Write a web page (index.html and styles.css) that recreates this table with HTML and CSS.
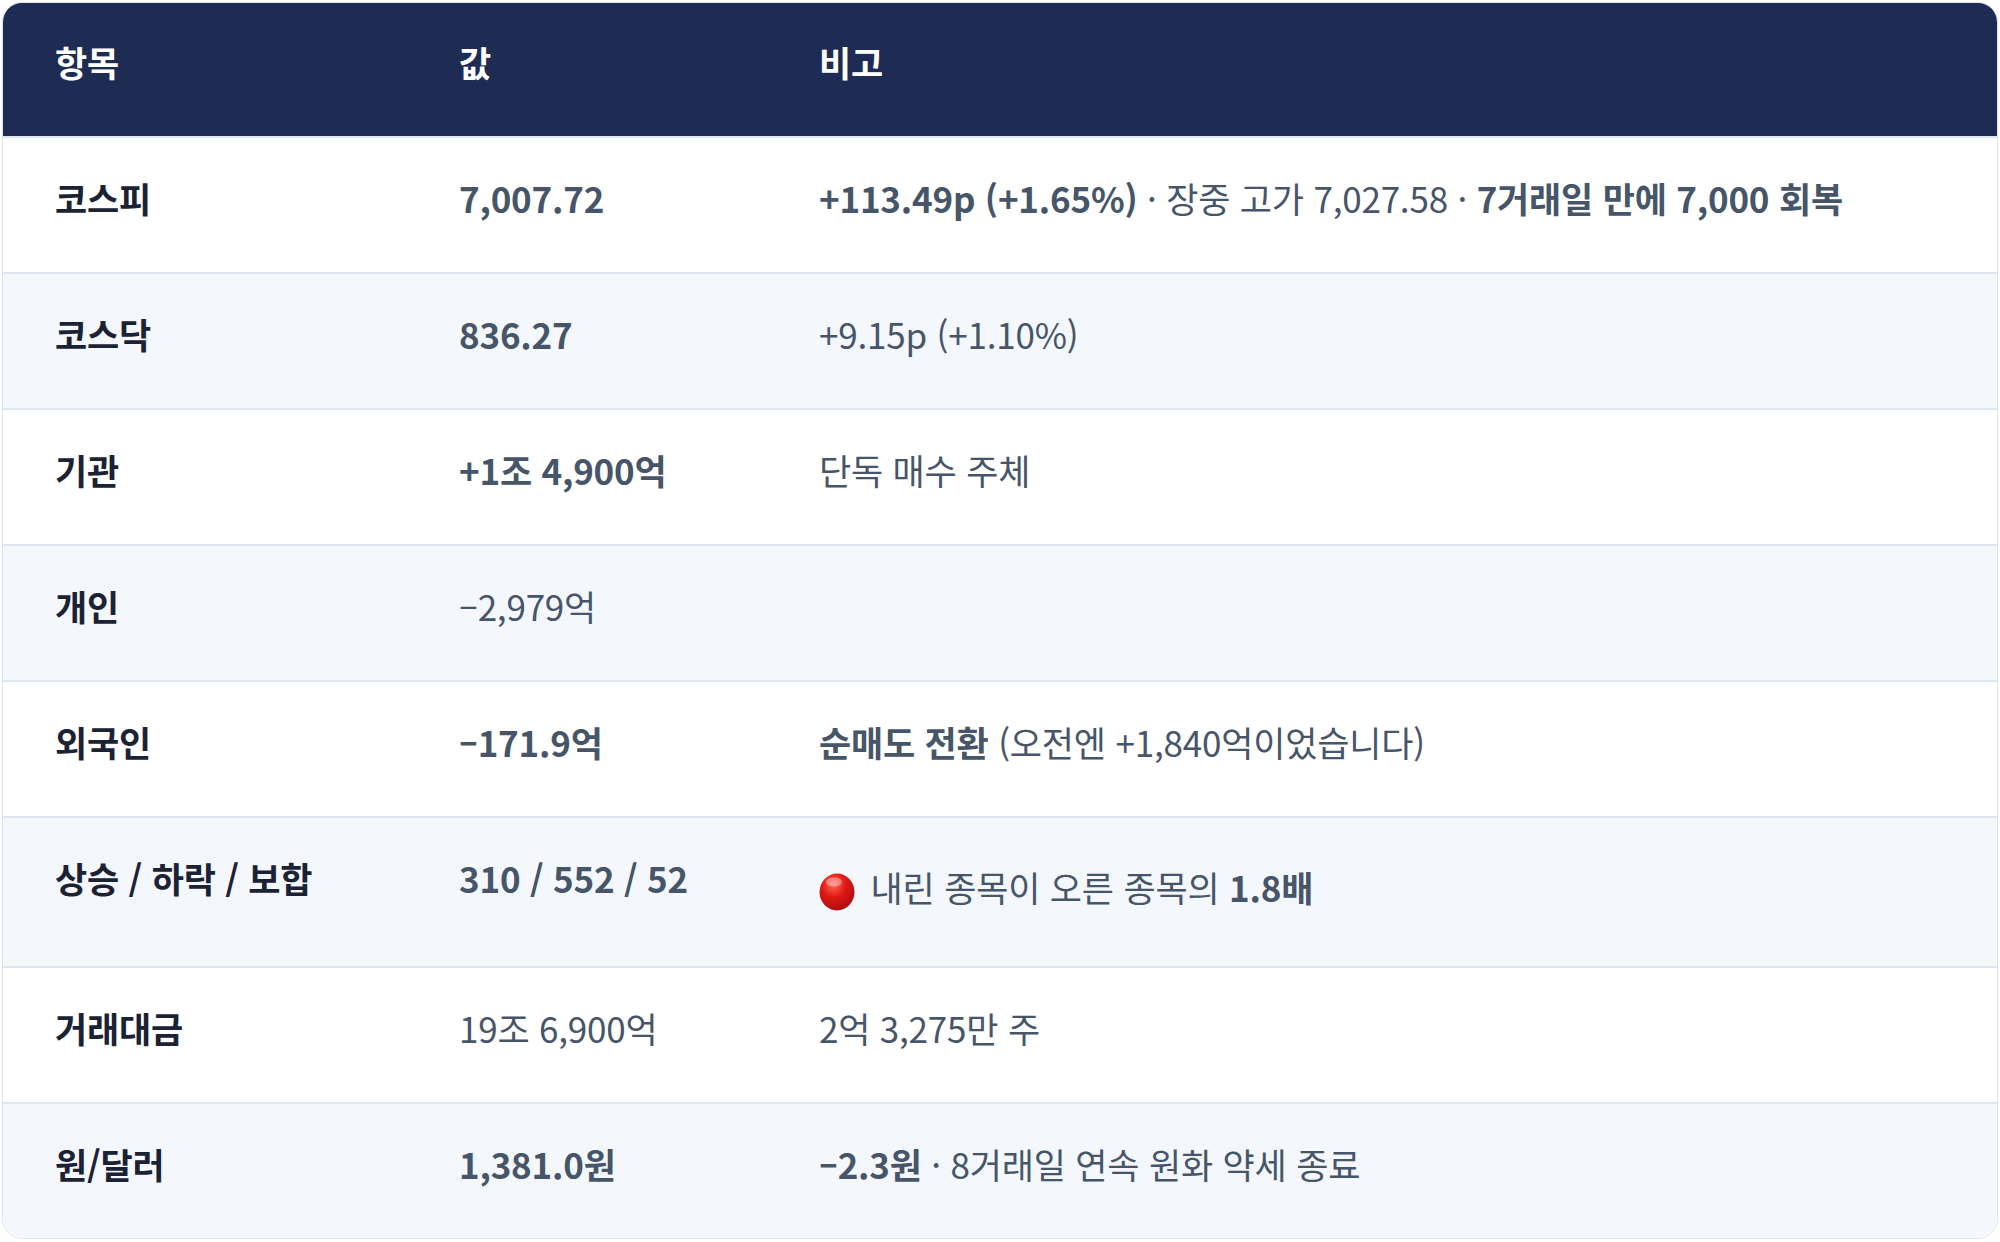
FILE: index.html
```html
<!DOCTYPE html>
<html lang="ko">
<head>
<meta charset="utf-8">
<link rel="stylesheet" href="styles.css">
</head>
<body>
<div class="card">
  <table class="data">
    <colgroup>
      <col class="c1"><col class="c2"><col class="c3">
    </colgroup>
    <thead>
      <tr><th>항목</th><th>값</th><th>비고</th></tr>
    </thead>
    <tbody>
      <tr><td class="k">코스피</td><td class="v b">7,007.72</td><td class="n"><span class="b">+113.49p (+1.65%)</span> · 장중 고가 7,027.58 · <span class="b">7거래일 만에 7,000 회복</span></td></tr>
      <tr><td class="k">코스닥</td><td class="v b">836.27</td><td class="n">+9.15p (+1.10%)</td></tr>
      <tr><td class="k">기관</td><td class="v b">+1조 4,900억</td><td class="n">단독 매수 주체</td></tr>
      <tr><td class="k">개인</td><td class="v">–2,979억</td><td class="n"></td></tr>
      <tr><td class="k">외국인</td><td class="v b">–171.9억</td><td class="n"><span class="b">순매도 전환</span> (오전엔 +1,840억이었습니다)</td></tr>
      <tr class="tall"><td class="k">상승 / 하락 / 보합</td><td class="v b">310 / 552 / 52</td><td class="n"><svg class="dot" viewBox="0 0 36 38" aria-hidden="true"><defs><radialGradient id="rg" cx="0.4" cy="0.3" r="0.75"><stop offset="0" stop-color="#ff6a5c"/><stop offset="0.45" stop-color="#e01a14"/><stop offset="1" stop-color="#a80c0c"/></radialGradient></defs><ellipse cx="18" cy="19" rx="17.5" ry="18.5" fill="url(#rg)"/><ellipse cx="15" cy="9" rx="8" ry="4.5" fill="#ffffff" opacity="0.35"/></svg> 내린 종목이 오른 종목의 <span class="b">1.8배</span></td></tr>
      <tr><td class="k">거래대금</td><td class="v">19조 6,900억</td><td class="n">2억 3,275만 주</td></tr>
      <tr><td class="k">원/달러</td><td class="v b">1,381.0원</td><td class="n"><span class="b">–2.3원</span> · 8거래일 연속 원화 약세 종료</td></tr>
    </tbody>
  </table>
</div>
</body>
</html>
```
FILE: styles.css
```css
html, body {
  margin: 0;
  padding: 0;
  background: #ffffff;
}
body {
  font-family: "Noto Sans CJK KR", "Noto Sans", sans-serif;
  color: #475569;
}
.card {
  margin: 2px;
  border: 1px solid #dfe5ef;
  border-radius: 20px;
  overflow: hidden;
  width: 1994px;
}
.data {
  width: 100%;
  border-collapse: collapse;
  table-layout: fixed;
  font-size: 35px;
  letter-spacing: -0.2px;
}
.c1 { width: 404px; }
.c2 { width: 360px; }
thead th {
  background: #1e2c54;
  color: #ffffff;
  font-weight: 700;
  text-align: left;
  padding: 0 0 16px 52px;
  height: 117px;
  line-height: 1;
  vertical-align: middle;
}
tbody td {
  padding: 37px 0 51px 52px;
  border-top: 2px solid #dfe6f1;
  vertical-align: top;
  line-height: 46px;
  white-space: nowrap;
}
tbody tr.tall td.n {
  padding-top: 46px;
  padding-bottom: 55px;
}
tbody tr:nth-child(even) td {
  background: #f4f7fc;
}
td.k {
  color: #1b2233;
  font-weight: 700;
}
.b { font-weight: 600; }
.dot {
  width: 36px;
  height: 38px;
  margin-right: 6px;
  vertical-align: -9px;
}
```
